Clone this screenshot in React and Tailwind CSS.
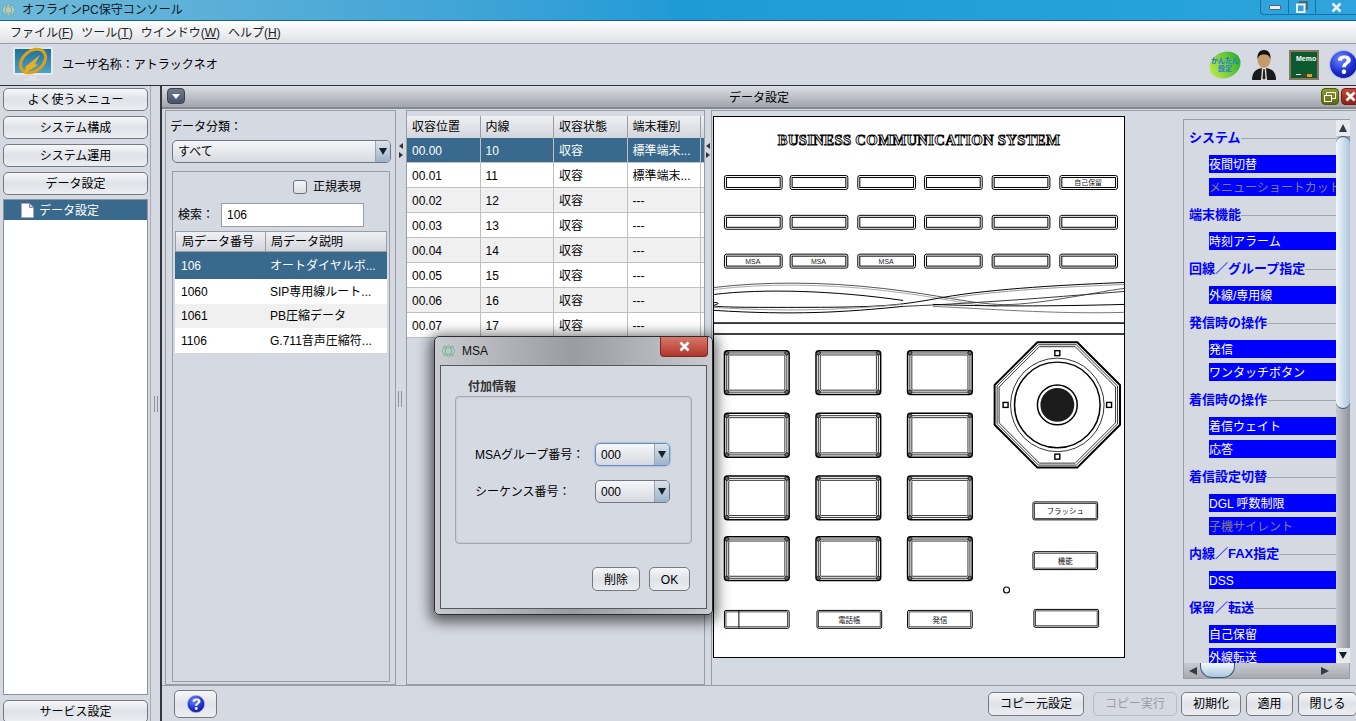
const lineKeyX = [10, 76, 144, 211, 279, 347];
const lineKeyY = [58, 98, 137];
const padX = [10, 102, 194];
const padY = [234, 297, 360, 421];

const sections = [
  { title: "システム", items: [["夜間切替"], ["メニューショートカット", true]] },
  { title: "端末機能", items: [["時刻アラーム"]] },
  { title: "回線／グループ指定", items: [["外線/専用線"]] },
  { title: "発信時の操作", items: [["発信"], ["ワンタッチボタン"]] },
  { title: "着信時の操作", items: [["着信ウェイト"], ["応答"]] },
  { title: "着信設定切替", items: [["DGL 呼数制限"], ["子機サイレント", true]] },
  { title: "内線／FAX指定", items: [["DSS"]] },
  { title: "保留／転送", items: [["自己保留"], ["外線転送"]] },
];

const lines = [
  ["00.00", "10", "収容", "標準端末..."],
  ["00.01", "11", "収容", "標準端末..."],
  ["00.02", "12", "収容", "---"],
  ["00.03", "13", "収容", "---"],
  ["00.04", "14", "収容", "---"],
  ["00.05", "15", "収容", "---"],
  ["00.06", "16", "収容", "---"],
  ["00.07", "17", "収容", "---"],
];

const officeData = [
  ["106", "オートダイヤルボ..."],
  ["1060", "SIP専用線ルート..."],
  ["1061", "PB圧縮データ"],
  ["1106", "G.711音声圧縮符..."],
];

function Btn({ children, className = "", off }) {
  return (
    <button
      className={
        "flex shrink-0 items-center justify-center rounded-[5px] border pt-px text-[12px] " +
        (off
          ? "border-[#b9bcc3] bg-[#d5d9e2] text-[#9a9da3] "
          : "border-[#77797f] bg-linear-to-b from-[#f6f7f9] via-[#dfe2e8] to-[#eceef2] text-black ") +
        className
      }
    >
      {children}
    </button>
  );
}

function Arrow({ up }) {
  return (
    <span className={"h-0 w-0 border-x-[4px] border-x-transparent " + (up ? "border-b-[8px] border-b-[#333b44]" : "border-t-[7px] border-t-[#14202c]")} />
  );
}

function Combo({ value, className = "" }) {
  return (
    <div className={"flex items-stretch overflow-hidden rounded-[5px] border bg-linear-to-b from-[#f6f7f9] to-[#d6d9e0] text-[12px] " + className}>
      <span className="flex flex-1 items-center pt-px pl-[5px]">{value}</span>
      <span className="flex w-[15px] items-center justify-center border-l border-[#9aa6b4] bg-linear-to-b from-[#dce4ec] to-[#9db3c8]">
        <Arrow />
      </span>
    </div>
  );
}

function SplitArrows({ className = "" }) {
  return (
    <div className={"flex flex-col items-center gap-[3px] " + className}>
      <span className="h-0 w-0 border-y-[3px] border-r-[4px] border-y-transparent border-r-[#333]" />
      <span className="h-0 w-0 border-y-[3px] border-l-[4px] border-y-transparent border-l-[#333]" />
    </div>
  );
}

function CloseGlyph({ size = 11, color = "#fff" }) {
  return (
    <svg width={size} height={size} viewBox="0 0 11 11">
      <path d="M1.500 1.500l8 8M9.500 1.500l-8 8" fill="none" stroke={color} strokeWidth="2.600" />
    </svg>
  );
}

function AppIcon() {
  return (
    <svg width="13" height="14" viewBox="0 0 13 14" className="mr-[7px]">
      <path d="M6.500 1l2 1.500 2.500-.5.500 2.500L13 7l-1.500 2.500-.5 2.500-2.500-.5-2 1.500-2-1.500-2.500.5-.5-2.500L0 7l1.500-2.500L2 2l2.500.5z" fill="#9fd8c0" stroke="#5f8f80" strokeWidth="0.5" />
      <rect x="4" y="4" width="5" height="6" fill="#f2f2f2" stroke="#555" strokeWidth="0.6" />
      <path d="M5 6h3M5 8h3" stroke="#555" strokeWidth="0.6" />
    </svg>
  );
}

function HelpIcon({ size = 26 }) {
  return (
    <svg width={size} height={size} viewBox="0 0 26 26">
      <defs>
        <radialGradient id={"hb" + size} cx="0.4" cy="0.3" r="0.8">
          <stop offset="0" stopColor="#6f8cff" />
          <stop offset="0.6" stopColor="#1d2fd0" />
          <stop offset="1" stopColor="#0b1480" />
        </radialGradient>
      </defs>
      <circle cx="13" cy="13" r="12.500" fill={"url(#hb" + size + ")"} stroke="#b8c2e8" />
      <path d="M8 9.500C8 6 11 5 14 5c3.500 0 5.500 1.800 5.500 4.200 0 3-4 3.500-4.500 6.300h-3.200c0-3.500 4-4.300 4-6.200 0-1-.8-1.600-2-1.600-1.400 0-2 .8-2.200 2z" fill="#fff" />
      <circle cx="13.400" cy="19.500" r="2" fill="#fff" />
    </svg>
  );
}

function LineKey({ x, y, label }) {
  return (
    <g>
      <rect x={x + 0.5} y={y + 0.5} width="58" height="14" rx="2" fill="#fff" stroke="#000" />
      <rect x={x + 2.500} y={y + 2.500} width="54" height="10" fill="#fff" stroke="#000" />
      {label && (
        <text x={x + 29} y={y + 10.500} textAnchor="middle" fontSize="7" fill="#222">
          {label}
        </text>
      )}
    </g>
  );
}

function PadKey({ x, y }) {
  const corners = [
    [x + 3, y + 3],
    [x + 63, y + 3],
    [x + 3, y + 42],
    [x + 63, y + 42],
  ];
  return (
    <g fill="none" stroke="#000">
      <rect x={x + 0.5} y={y + 0.5} width="65" height="44" rx="3" strokeWidth="1.500" />
      <rect x={x + 2.800} y={y + 2.800} width="60.400" height="39.400" rx="2" strokeWidth="0.8" />
      <rect x={x + 4.800} y={y + 4.800} width="56.400" height="35.400" rx="1" strokeWidth="0.8" />
      {corners.map(([cx, cy]) => (
        <circle key={cx + "-" + cy} cx={cx} cy={cy} r="2" fill="#666" strokeWidth="0.7" />
      ))}
    </g>
  );
}

function WideKey({ x, y, label, split }) {
  return (
    <g>
      <rect x={x + 0.5} y={y + 0.5} width="65" height="18" rx="1.500" fill="#fff" stroke="#000" />
      <rect x={x + 2} y={y + 2} width="62" height="15" fill="#fff" stroke="#000" strokeWidth="0.7" />
      {split && <line x1={x + 15} x2={x + 15} y1={y + 1} y2={y + 18} stroke="#000" />}
      {label && (
        <text x={x + 33} y={y + 13} textAnchor="middle" fontSize="7.500" fill="#111">
          {label}
        </text>
      )}
    </g>
  );
}

function octagon(cx, cy, r, side) {
  return [
    [-side, -r],
    [side, -r],
    [r, -side],
    [r, side],
    [side, r],
    [-side, r],
    [-r, side],
    [-r, -side],
  ]
    .map(([x, y]) => cx + x + "," + (cy + y))
    .join(" ");
}

function PhoneDrawing() {
  const cx = 345;
  const cy = 289;
  return (
    <svg width="412" height="542" viewBox="0 0 412 542" className="shrink-0 border border-black bg-white">
      <text x="206" y="28" textAnchor="middle" fontSize="14.800" fontWeight="700" fill="#fff" stroke="#000" strokeWidth="0.9" letterSpacing="0.3" style={{ fontFamily: "'Liberation Serif', serif" }}>
        BUSINESS COMMUNICATION SYSTEM
      </text>
      {lineKeyY.map((y, r) =>
        lineKeyX.map((x, c) => (
          <LineKey key={x + "-" + y} x={x} y={y} label={r === 0 && c === 5 ? "自己保留" : r === 2 && c < 3 ? "MSA" : ""} />
        ))
      )}
      <g fill="none" strokeWidth="1">
        <path d="M0 171C50 165 110 165 170 172S250 186 285 188 380 176 412 172" stroke="#555" />
        <path d="M0 173C50 167 110 167 170 174S250 188 285 190" stroke="#aaa" />
        <path d="M412 166C360 168 280 172 230 181S170 191 64 191 20 188 0 186" stroke="#000" />
        <path d="M412 168C360 170 280 174 230 183" stroke="#999" />
        <path d="M0 178C50 172 120 174 190 184" stroke="#000" />
        <path d="M412 175C350 180 280 186 190 190" stroke="#333" />
        <path d="M0 194C80 199 130 196 190 190" stroke="#000" />
        <path d="M0 191C80 196 130 193 190 188" stroke="#999" />
        <path d="M412 188C340 190 270 190 220 188" stroke="#000" />
        <path d="M412 196C340 198 270 192 220 190" stroke="#777" />
      </g>
      <rect x="0" y="206" width="412" height="1.500" fill="#000" />
      <rect x="0" y="217" width="412" height="1.500" fill="#000" />
      {padY.map((y) => padX.map((x) => <PadKey key={x + "-" + y} x={x} y={y} />))}
      <WideKey x={10} y={495} split />
      <WideKey x={103} y={495} label="電話帳" />
      <WideKey x={194} y={495} label="発信" />
      <WideKey x={320} y={386} label="フラッシュ" />
      <WideKey x={320} y={436} label="機能" />
      <WideKey x={321} y={494} />
      <circle cx="294" cy="475" r="3" fill="#fff" stroke="#000" strokeWidth="1.200" />
      <g fill="none" stroke="#000" strokeLinejoin="round">
        <polygon points={octagon(cx, cy, 63, 20)} strokeWidth="2" />
        <polygon points={octagon(cx, cy, 60.500, 19)} strokeWidth="0.8" />
        <polygon points={octagon(cx, cy, 58.500, 18)} strokeWidth="0.8" />
        <circle cx={cx} cy={cy} r="47" strokeWidth="0.8" />
        <circle cx={cx} cy={cy} r="43" strokeWidth="1.500" />
        <circle cx={cx} cy={cy} r="20" strokeWidth="1.500" />
      </g>
      <circle cx={cx} cy={cy} r="17" fill="#1c1c1c" />
      {[
        [cx, cy - 52],
        [cx, cy + 52],
        [cx - 52, cy],
        [cx + 52, cy],
      ].map(([x, y]) => (
        <rect key={x + "-" + y} x={x - 2.500} y={y - 2.500} width="5" height="5" fill="#fff" stroke="#000" strokeWidth="1.400" />
      ))}
    </svg>
  );
}

export default function App() {
  return (
    <div className="relative flex h-[721px] w-[1356px] flex-col overflow-hidden bg-[#d5d9e2] font-['Liberation_Sans','Noto_Sans_CJK_JP',sans-serif] text-[12px] text-black">
      {/* window title */}
      <div className="flex h-[20px] shrink-0 items-center bg-linear-to-r from-[#6fb9d8] via-[#1f9ad6] to-[#2aa4da] pl-[2px]">
        <AppIcon />
        <span className="text-[#0a1a26]">オフラインPC保守コンソール</span>
        <div className="ml-auto flex h-[15px] items-center self-start rounded-bl-[4px] border-b border-l border-[#1672a6] bg-[#2fa3db]">
          <span className="flex h-full w-[28px] items-center justify-center border-r border-[#1672a6]">
            <span className="h-[5px] w-[12px] rounded-[1px] border border-[#55636e] bg-[#e9eef2]" />
          </span>
          <span className="flex h-full w-[27px] items-center justify-center border-r border-[#1672a6]">
            <svg width="12" height="12" viewBox="0 0 12 12">
              <rect x="3.500" y="1" width="7.500" height="7" fill="none" stroke="#55636e" strokeWidth="2" />
              <rect x="1" y="3.500" width="7.500" height="7.500" fill="#2fa3db" stroke="#e9eef2" strokeWidth="2" />
            </svg>
          </span>
          <span className="flex h-full w-[40px] items-center justify-center">
            <CloseGlyph color="#e9eef2" />
          </span>
        </div>
      </div>
      <div className="h-px shrink-0 bg-[#15628e]" />
      {/* menu */}
      <div className="flex h-[23px] shrink-0 items-center gap-[8px] border-b border-[#9a9da3] bg-linear-to-b from-[#ffffff] to-[#dfe1e6] pt-px pl-[10px] text-[#222]">
        <span>ファイル(<u>F</u>)</span>
        <span>ツール(<u>T</u>)</span>
        <span>ウインドウ(<u>W</u>)</span>
        <span>ヘルプ(<u>H</u>)</span>
      </div>
      {/* user header */}
      <div className="flex h-[41px] shrink-0 items-center pl-[13px]">
        <svg width="40" height="38" viewBox="0 0 40 38">
          <defs>
            <linearGradient id="screen" x1="0" y1="0" x2="0" y2="1">
              <stop offset="0" stopColor="#1d6f9c" />
              <stop offset="1" stopColor="#4fa3c4" />
            </linearGradient>
          </defs>
          <rect x="0" y="1" width="40" height="28" fill="#e6e8ec" />
          <rect x="2" y="3" width="36" height="24" fill="url(#screen)" />
          <ellipse cx="20" cy="15" rx="14" ry="10" fill="none" stroke="#e0a015" strokeWidth="3" transform="rotate(-40 20 15)" />
          <path d="M13 20l14-11-5 9 3 1-14 9z" fill="#e8b020" />
          <path d="M16 30h8v3h5v2H11v-2h5z" fill="#dfe2e6" />
        </svg>
        <span className="ml-[9px] pt-px">ユーザ名称：アトラックネオ</span>
        <div className="ml-auto flex items-center">
          <div className="flex h-[26px] w-[32px] -rotate-25 items-center justify-center rounded-[50%] bg-linear-to-r from-[#b8e84a] to-[#20b030]">
            <span className="rotate-25 text-center text-[7px] leading-[8px] font-bold text-[#1f7ad8]">かんたん<br />設定</span>
          </div>
          <svg width="26" height="30" viewBox="0 0 26 30" className="ml-[10px]">
            <path d="M1 30c0-8 4-12 12-12s12 4 12 12z" fill="#1a1a1a" />
            <path d="M11 18h4l1 12h-6z" fill="#ddd" />
            <path d="M12.300 19h1.400l.8 9-1.500 2-1.500-2z" fill="#222" />
            <ellipse cx="13" cy="10" rx="6.500" ry="8" fill="#c49a6c" />
            <path d="M6.500 9C6 3 9 0 13 0s7 3 6.500 9C18 5 16 4.500 13 4.500S8 5 6.500 9z" fill="#111" />
          </svg>
          <div className="ml-[12px] flex h-[30px] w-[30px] flex-col border-[2px] border-[#8a7560] bg-[#0c5a30] px-[5px] pt-[3px]">
            <span className="text-[7px] leading-[7px] font-bold text-white">Memo</span>
            <div className="mt-auto mb-px flex justify-between">
              <span className="h-px w-[5px] bg-white" />
              <span className="h-px w-[4px] bg-red-600" />
              <span className="h-[3px] w-[5px] bg-[#e0a020]" />
            </div>
          </div>
          <div className="ml-[10px] w-[27px] overflow-hidden">
            <div className="w-[30px]">
              <HelpIcon size={29} />
            </div>
          </div>
        </div>
      </div>

      <div className="flex min-h-0 flex-1 border-t border-[#2f3136]">
        {/* sidebar */}
        <div className="flex w-[148px] shrink-0 flex-col gap-[5px] pt-[2px] pl-[3px]">
          <Btn className="h-[23px] w-[145px]">よく使うメニュー</Btn>
          <Btn className="h-[23px] w-[145px]">システム構成</Btn>
          <Btn className="h-[23px] w-[145px]">システム運用</Btn>
          <Btn className="h-[23px] w-[145px]">データ設定</Btn>
          <div className="-mt-px h-[496px] w-[145px] shrink-0 border border-[#8f9298] bg-white">
            <div className="flex h-[20px] items-center bg-[#396a8d] pt-px pl-[17px] text-white">
              <svg width="13" height="15" viewBox="0 0 13 15" className="mr-[5px]">
                <path d="M.5.500h8l4 4v10H.5z" fill="#fff" stroke="#aab" />
                <path d="M8.500.500v4h4" fill="#ccd" stroke="#889" />
              </svg>
              データ設定
            </div>
          </div>
          <Btn className="h-[23px] w-[145px]">サービス設定</Btn>
        </div>
        {/* gutter */}
        <div className="ml-[2px] flex w-[10px] shrink-0 items-center justify-center border-l border-[#a8abb2]">
          <div className="h-[16px] w-[4px] border-x border-[#8f9298]" />
        </div>

        {/* main window */}
        <div className="flex min-w-0 flex-1 flex-col border-l-2 border-[#34363b]">
          <div className="relative flex h-[23px] shrink-0 items-center justify-center border-b-2 border-[#85888f] bg-linear-to-b from-[#dcdfe5] to-[#a2a5ad] pt-[3px]">
            <span className="absolute top-[2px] left-[5px] flex h-[16px] w-[18px] items-center justify-center rounded-[4px] border border-[#3c4150] bg-linear-to-b from-[#737a91] to-[#4a5068]">
              <span className="h-0 w-0 border-x-[4px] border-t-[5px] border-x-transparent border-t-white" />
            </span>
            <span>データ設定</span>
            <span className="absolute top-[2px] right-[17px] flex h-[17px] w-[18px] items-center justify-center rounded-[4px] border border-[#4c5a10] bg-linear-to-b from-[#8d9a30] to-[#5e6a14]">
              <svg width="12" height="10" viewBox="0 0 12 10">
                <path d="M2.500 3V.5h9v6H8" fill="none" stroke="#fff" />
                <rect x=".5" y="3.500" width="7" height="6" fill="none" stroke="#fff" />
              </svg>
            </span>
            <span className="absolute top-[2px] right-[-3px] flex h-[17px] w-[18px] items-center justify-center rounded-[4px] border border-[#7a1a14] bg-linear-to-b from-[#c04a3a] to-[#8f2018]">
              <CloseGlyph />
            </span>
          </div>

          <div className="flex h-[576px] shrink-0 pt-[1px] pl-[3px]">
            {/* category and search */}
            <div className="flex w-[231px] shrink-0 flex-col border border-[#9a9da3] px-[4px]">
              <span className="mt-[6px] h-[23px] leading-[21px]">データ分類：</span>
              <Combo value="すべて" className="ml-[2px] h-[23px] w-[219px] border-[#6f7784]" />
              <div className="mt-[8px] ml-[2px] flex h-[511px] w-[218px] flex-col border border-[#9a9da3]">
                <div className="mt-[7px] flex h-[16px] items-center pl-[120px]">
                  <span className="h-[14px] w-[14px] rounded-[3px] border border-[#6f7279] bg-linear-to-b from-[#f4f5f7] to-[#dcdfe5]" />
                  <span className="ml-[6px]">正規表現</span>
                </div>
                <div className="mt-[8px] flex h-[24px] items-center pl-[5px]">
                  <span className="w-[43px]">検索：</span>
                  <div className="flex h-[24px] w-[143px] items-center border border-[#9a9da3] bg-white pl-[5px]">106</div>
                </div>
                <div className="mt-[4px] ml-[2px] flex h-[21px] w-[212px] shrink-0 border border-[#9a9da3] bg-linear-to-b from-[#f0f1f4] to-[#d2d5dc]">
                  <span className="flex w-[90px] items-center border-r border-[#9a9da3] pl-[6px]">局データ番号</span>
                  <span className="flex flex-1 items-center pl-[5px]">局データ説明</span>
                </div>
                <div className="ml-[2px] flex w-[212px] flex-col">
                  {officeData.map(([no, desc], i) => (
                    <div
                      key={no}
                      className={"flex items-center " + (i === 0 ? "h-[27px] bg-[#396a8d] text-white" : i % 2 === 1 ? "h-[25px] bg-white" : "h-[24px] bg-[#f0f0f0]")}
                    >
                      <span className="w-[90px] pl-[6px]">{no}</span>
                      <span className="flex-1 pl-[5px]">{desc}</span>
                    </div>
                  ))}
                </div>
              </div>
            </div>

            <div className="flex w-[10px] shrink-0 flex-col items-center">
              <SplitArrows className="mt-[33px]" />
              <div className="mt-[233px] -ml-[3px] h-[16px] w-[4px] border-x border-[#8f9298]" />
            </div>

            {/* line table */}
            <div className="flex w-[299px] shrink-0 flex-col border border-[#9a9da3]">
              <div className="mt-[5px] flex h-[22px] shrink-0 bg-linear-to-b from-[#f0f1f4] to-[#d2d5dc]">
                {["収容位置", "内線", "収容状態", "端末種別"].map((h) => (
                  <span key={h} className="flex w-[73.500px] items-center border-r border-[#9a9da3] pl-[5px]">{h}</span>
                ))}
              </div>
              {lines.map((row, i) => (
                <div
                  key={row[0]}
                  className={"flex h-[25px] shrink-0 border-b border-[#c0c0c0] " + (i === 0 ? "bg-[#396a8d] text-white" : i % 2 === 1 ? "bg-white" : "bg-[#f0f0f0]")}
                >
                  {row.map((v, j) => (
                    <span key={j} className="flex w-[73.500px] items-center border-r border-[#c0c0c0] pt-px pl-[5px] whitespace-nowrap">{v}</span>
                  ))}
                </div>
              ))}
            </div>

            <div className="flex w-[6px] shrink-0 flex-col items-center">
              <SplitArrows className="mt-[33px]" />
            </div>

            {/* phone and function list */}
            <div className="flex min-w-0 flex-1 border-t border-l border-[#9a9da3] pt-[5px] pl-[1px]">
              <PhoneDrawing />
              <div className="mt-[3px] ml-[58px] flex h-[560px] w-[167px] shrink-0 flex-col border border-[#9a9da3]">
                <div className="flex min-h-0 flex-1">
                  <div className="w-[152px] shrink-0 overflow-hidden pt-[9px] pl-[5px]">
                    {sections.map((s, i) => (
                      <div key={s.title} className={i > 0 ? "mt-[10px]" : ""}>
                        <div className="mb-[8px] flex h-[18px] items-center">
                          <span className="text-[13px] font-bold whitespace-nowrap text-[#0000ff]">{s.title}</span>
                          <span className="h-px flex-1 bg-[#a3a6ad]" />
                        </div>
                        <div className="flex flex-col gap-[5px] pl-[20px]">
                          {s.items.map(([label, off]) => (
                            <div
                              key={label}
                              className={"flex h-[18px] items-center overflow-hidden bg-[#0000ff] pt-px whitespace-nowrap " + (off ? "text-[#808080]" : "text-white")}
                            >
                              {label}
                            </div>
                          ))}
                        </div>
                      </div>
                    ))}
                  </div>
                  {/* vertical scrollbar */}
                  <div className="flex w-[14px] shrink-0 flex-col bg-linear-to-r from-[#c8cbd2] to-[#8f9299]">
                    <div className="flex h-[16px] shrink-0 items-center justify-center bg-[#e8eaee]">
                      <Arrow up />
                    </div>
                    <div className="h-[273px] shrink-0 rounded-[10px] border-y border-[#3b5a78] bg-linear-to-r from-[#f4f8fb] to-[#a9c6de]" />
                    <div className="flex-1" />
                    <div className="flex h-[15px] shrink-0 items-center justify-center bg-[#e8eaee]">
                      <Arrow />
                    </div>
                  </div>
                </div>
                {/* horizontal scrollbar */}
                <div className="flex h-[15px] shrink-0 items-center bg-linear-to-b from-[#c8cbd2] to-[#a6a9b0]">
                  <span className="ml-[5px] h-0 w-0 border-y-[4px] border-r-[8px] border-y-transparent border-r-[#333b44]" />
                  <span className="ml-[3px] h-full w-[35px] rounded-b-[12px] border-x border-b border-[#3b5a78] bg-linear-to-b from-[#f4f8fb] to-[#a9c6de]" />
                  <span className="mr-[20px] ml-auto h-0 w-0 border-y-[4px] border-l-[8px] border-y-transparent border-l-[#333b44]" />
                </div>
              </div>
            </div>
          </div>

          {/* footer */}
          <div className="flex flex-1 items-center border-t border-[#9a9da3] pl-[12px]">
            <Btn className="h-[28px] w-[43px]">
              <HelpIcon size={18} />
            </Btn>
            <div className="ml-auto flex items-center">
              <Btn className="h-[24px] w-[96px]">コピー元設定</Btn>
              <Btn off className="ml-[9px] h-[24px] w-[84px]">コピー実行</Btn>
              <Btn className="ml-[4px] h-[24px] w-[60px]">初期化</Btn>
              <Btn className="ml-[5px] h-[24px] w-[47px]">適用</Btn>
              <Btn className="-mr-[1px] ml-[5px] h-[24px] w-[59px]">閉じる</Btn>
            </div>
          </div>
        </div>
      </div>

      {/* MSA dialog */}
      <div className="absolute top-[336px] left-[434px] flex h-[279px] w-[279px] flex-col rounded-[5px] border border-[#2b2d31] bg-linear-to-r from-[#c9cbd0] via-[#9a9ca1] to-[#c9cbd0] px-[5px] pb-[5px] shadow-[0_3px_14px_4px_rgba(0,0,0,0.6)]">
        <div className="relative flex h-[28px] shrink-0 items-center pl-[2px]">
          <AppIcon />
          <span className="text-[#111]">MSA</span>
          <span className="absolute top-0 right-[-1px] flex h-[20px] w-[48px] items-center justify-center rounded-b-[4px] border border-t-0 border-[#7a2a22] bg-linear-to-b from-[#d9786a] to-[#b0352a]">
            <CloseGlyph />
          </span>
        </div>
        <div className="flex min-h-0 flex-1 flex-col border border-[#55575c] bg-[#d5d9e2] px-[14px]">
          <span className="mt-[13px] ml-[13px] h-[17px] leading-[17px] font-bold text-[#333]">付加情報</span>
          <div className="flex h-[148px] shrink-0 flex-col rounded-[4px] border border-[#a4a8ae] pt-[46px] pl-[19px] shadow-[inset_0_0_2px_rgba(0,0,0,0.2)]">
            <div className="flex h-[23px] items-center">
              <span className="w-[120px]">MSAグループ番号：</span>
              <Combo value="000" className="h-[23px] w-[75px] border-[#5e8fc0] shadow-[0_0_2px_#5e8fc0]" />
            </div>
            <div className="mt-[14px] flex h-[23px] items-center">
              <span className="w-[120px]">シーケンス番号：</span>
              <Combo value="000" className="h-[23px] w-[75px] border-[#6f7784]" />
            </div>
          </div>
          <div className="mt-[23px] flex justify-end gap-[9px] pr-[2px]">
            <Btn className="h-[24px] w-[48px]">削除</Btn>
            <Btn className="h-[24px] w-[41px]">OK</Btn>
          </div>
        </div>
      </div>
    </div>
  );
}
